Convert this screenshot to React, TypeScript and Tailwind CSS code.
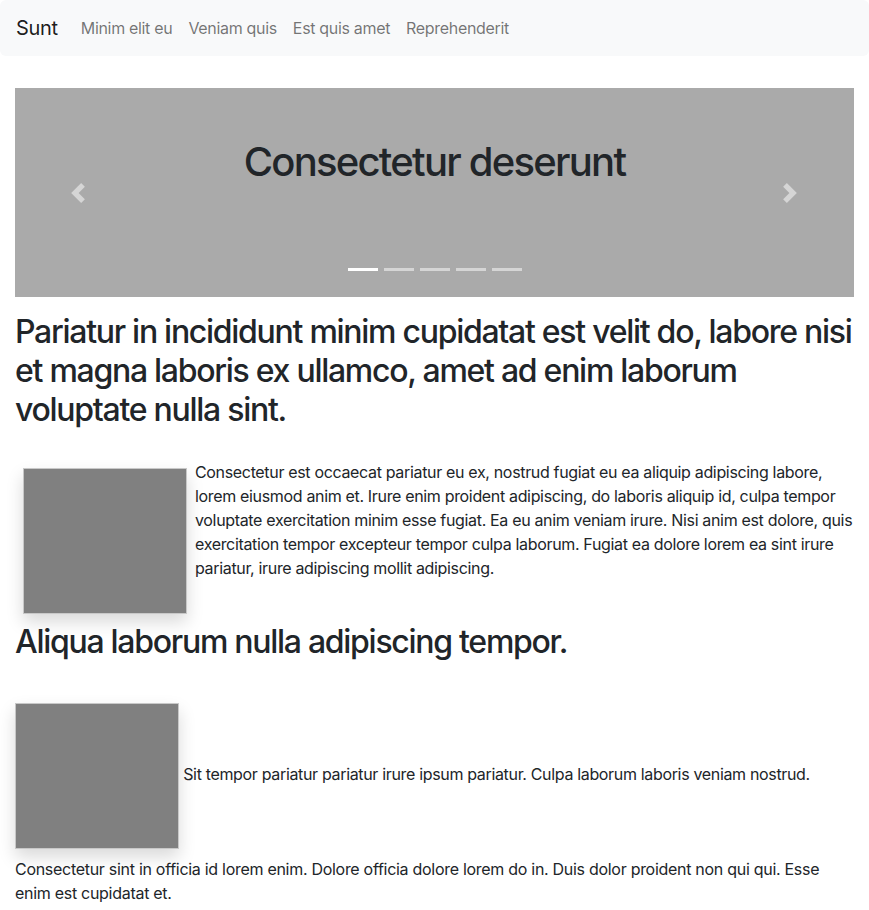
import React from "react";

function Chevron({ dir }: { dir: "l" | "r" }) {
  return (
    <svg width="20" height="20" viewBox="0 0 8 8" fill="#fff" fillOpacity="0.5">
      {dir === "l" ? (
        <path d="M5.25 0l-4 4 4 4 1.5-1.5L4.25 4l2.5-2.5L5.25 0z" />
      ) : (
        <path d="M2.75 0l-1.5 1.5L3.75 4l-2.5 2.5L2.75 8l4-4-4-4z" />
      )}
    </svg>
  );
}

export default function App() {
  return (
    <div className="bg-white text-[#212529] font-['Inter',sans-serif]">
      <nav className="h-14 bg-[#f8f9fa] rounded-md flex items-center px-4 tracking-[-0.02em]">
        <span className="text-[20px] text-black/90 mr-[15px]">Sunt</span>
        <div className="flex text-[16px] text-black/55">
          <span className="px-2">Minim elit eu</span>
          <span className="px-2">Veniam quis</span>
          <span className="px-2">Est quis amet</span>
          <span className="px-2">Reprehenderit</span>
        </div>
      </nav>
      <div className="px-[15px] pt-8">
        <div className="relative h-[209px] bg-[#aaaaaa] flex flex-col items-center">
          <h1 className="mt-[50px] text-[40px] leading-[48px] font-medium tracking-[-0.044em] text-[#212529]">Consectetur deserunt</h1>
          <div className="absolute left-[53px] top-[95px]">
            <Chevron dir="l" />
          </div>
          <div className="absolute right-[54px] top-[95px]">
            <Chevron dir="r" />
          </div>
          <div className="absolute bottom-[26px] left-0 right-0 flex justify-center">
            <span className="mx-[3px] w-[30px] h-[3px] bg-white"></span>
            <span className="mx-[3px] w-[30px] h-[3px] bg-white/50"></span>
            <span className="mx-[3px] w-[30px] h-[3px] bg-white/50"></span>
            <span className="mx-[3px] w-[30px] h-[3px] bg-white/50"></span>
            <span className="mx-[3px] w-[30px] h-[3px] bg-white/50"></span>
          </div>
        </div>
        <h2 className="mt-[15px] text-[32px] leading-[39px] font-medium tracking-[-0.04em]">
          Pariatur in incididunt minim cupidatat est velit do, labore nisi et magna laboris ex ullamco, amet ad enim laborum voluptate nulla sint.
        </h2>
        <div className="mt-[31px] flow-root tracking-[-0.021em]">
          <div className="float-left m-2 w-[164px] h-[146px] bg-[#808080] border border-[#c8c8c8] shadow-[0_8px_16px_rgba(0,0,0,0.15)]"></div>
          <p className="text-[16px] leading-6">
            Consectetur est occaecat pariatur eu ex, nostrud fugiat eu ea aliquip adipiscing labore, lorem eiusmod anim et. Irure enim proident adipiscing, do laboris aliquip id, culpa tempor voluptate exercitation minim esse fugiat. Ea eu anim veniam irure. Nisi anim est dolore, quis exercitation tempor excepteur tempor culpa laborum. Fugiat ea dolore lorem ea sint irure pariatur, irure adipiscing mollit adipiscing.
          </p>
        </div>
        <h2 className="text-[32px] leading-[39px] font-medium tracking-[-0.04em]">Aliqua laborum nulla adipiscing tempor.</h2>
        <p className="mt-[42px] text-[16px] leading-6 tracking-[-0.021em]">
          <span className="inline-block align-middle w-[164px] h-[146px] bg-[#808080] border border-[#c8c8c8] shadow-[0_8px_16px_rgba(0,0,0,0.15)]"></span>{" "}
          Sit tempor pariatur pariatur irure ipsum pariatur. Culpa laborum laboris veniam nostrud.
        </p>
        <p className="mt-[8px] text-[16px] leading-6 tracking-[-0.018em]">
          Consectetur sint in officia id lorem enim. Dolore officia dolore lorem do in. Duis dolor proident non qui qui. Esse
          <br />
          enim est cupidatat et.
        </p>
      </div>
    </div>
  );
}
